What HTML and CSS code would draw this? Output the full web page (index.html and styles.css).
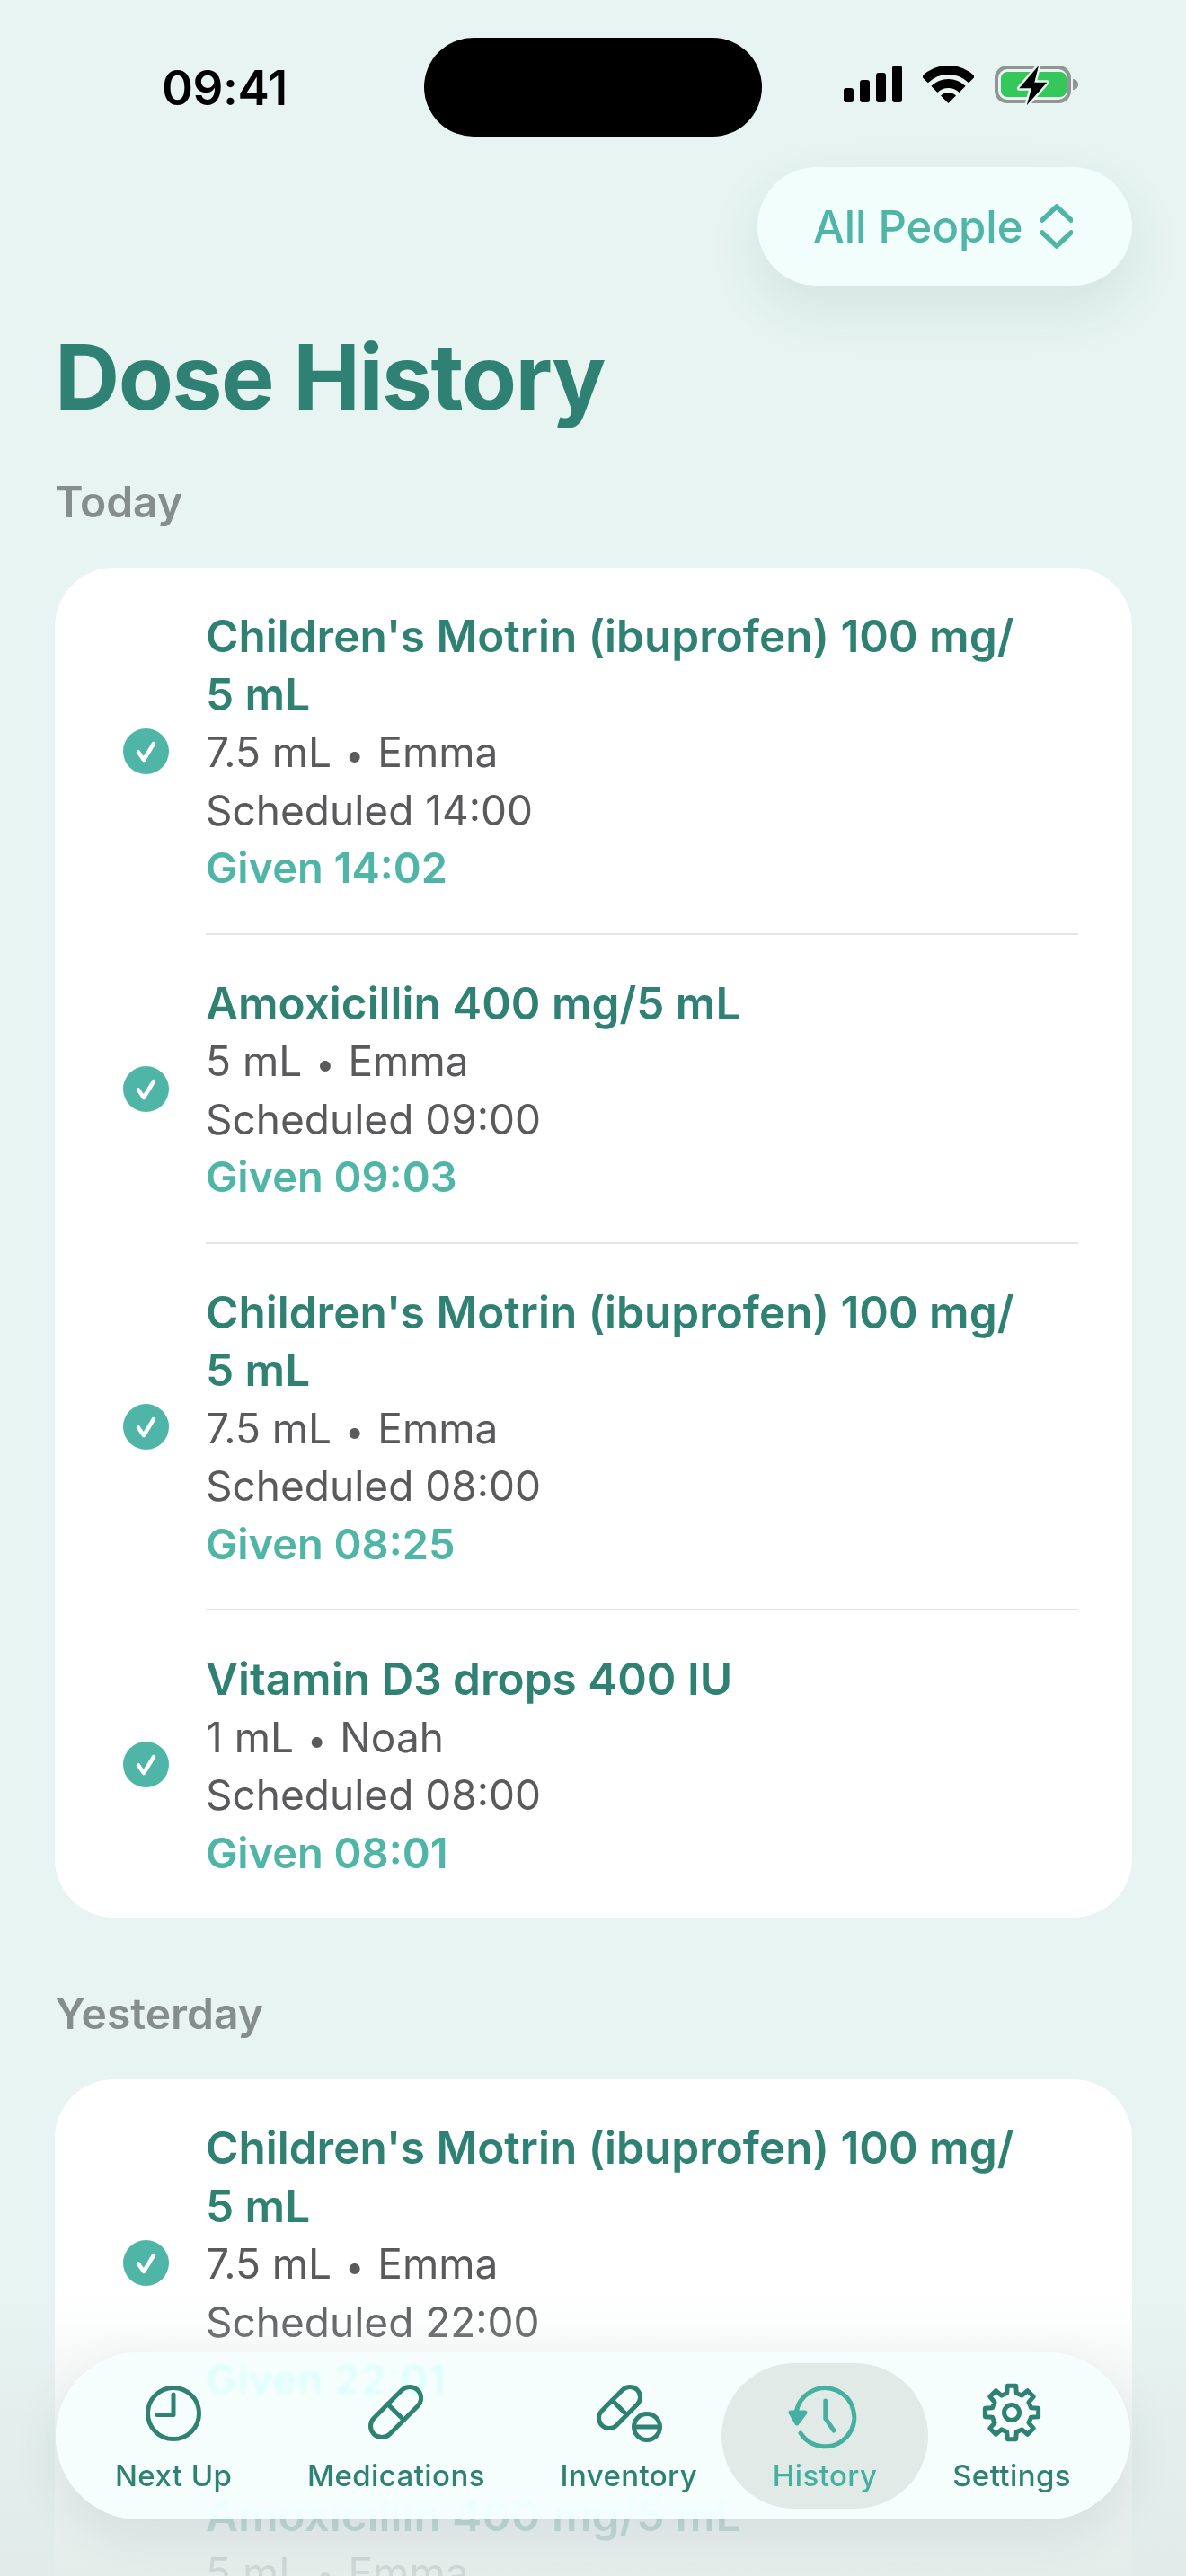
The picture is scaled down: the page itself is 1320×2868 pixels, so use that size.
FILE: index.html
```html
<!DOCTYPE html>
<html lang="en">
<head>
  <meta charset="UTF-8" />
  <title>Dose History</title>
  <link rel="stylesheet" href="styles.css">
</head>
<body>
  <div class="screen">
    <div class="status-bar">
      <div class="time">09:41</div>
      <div class="island"></div>
      <div class="status-icons">
        <svg class="signal" width="65" height="42" viewBox="0 0 65 42">
          <rect x="0" y="25" width="11" height="16" rx="3"/>
          <rect x="18" y="16" width="11" height="25" rx="3"/>
          <rect x="36" y="8" width="11" height="33" rx="3"/>
          <rect x="54" y="0" width="11" height="41" rx="3"/>
        </svg>
        <svg class="wifi" width="57" height="42" viewBox="0 0 57 42">
          <path d="M2.3 15.8A37 37 0 0 1 54.7 15.8" />
          <path d="M12.9 26.4A22 22 0 0 1 44.1 26.4" />
          <path class="wifi-dot" d="M28.5 42L20 33.5A12 12 0 0 1 37 33.5Z" />
        </svg>
        <svg class="battery" width="93" height="46" viewBox="0 0 93 46">
          <rect class="batt-shell" x="2" y="4" width="81" height="38" rx="12"/>
          <rect class="batt-fill" x="7" y="9" width="73" height="28" rx="7"/>
          <path class="batt-cap" d="M87 17c3 0 6 2 6 6s-3 6-6 6z"/>
          <path class="batt-bolt" d="M49 2L27.3 27.3H41L35.7 46.3L58.3 20.7H44.3Z"/>
        </svg>
      </div>
    </div>

    <div class="person-row">
      <button class="person-btn" type="button">
        <span>All People</span>
        <svg width="36" height="50" viewBox="0 0 36 50">
          <path d="M2 18L18 3L34 18M2 32L18 47L34 32"/>
        </svg>
      </button>
    </div>

    <h1>Dose History</h1>

    <h2>Today</h2>
    <section class="card">
      <div class="dose">
        <svg class="check" width="51" height="51" viewBox="0 0 51 51"><circle cx="25.5" cy="25.5" r="25.5"/><path d="M17 26.5L23 35L34 17"/></svg>
        <div class="dose-body">
          <div class="med">Children's Motrin (ibuprofen) 100 mg/<br>5 mL</div>
          <div class="line">7.5 mL <i>•</i> Emma</div>
          <div class="line">Scheduled 14:00</div>
          <div class="given">Given 14:02</div>
        </div>
      </div>
      <div class="dose">
        <svg class="check" width="51" height="51" viewBox="0 0 51 51"><circle cx="25.5" cy="25.5" r="25.5"/><path d="M17 26.5L23 35L34 17"/></svg>
        <div class="dose-body">
          <div class="med">Amoxicillin 400 mg/5 mL</div>
          <div class="line">5 mL <i>•</i> Emma</div>
          <div class="line">Scheduled 09:00</div>
          <div class="given">Given 09:03</div>
        </div>
      </div>
      <div class="dose">
        <svg class="check" width="51" height="51" viewBox="0 0 51 51"><circle cx="25.5" cy="25.5" r="25.5"/><path d="M17 26.5L23 35L34 17"/></svg>
        <div class="dose-body">
          <div class="med">Children's Motrin (ibuprofen) 100 mg/<br>5 mL</div>
          <div class="line">7.5 mL <i>•</i> Emma</div>
          <div class="line">Scheduled 08:00</div>
          <div class="given">Given 08:25</div>
        </div>
      </div>
      <div class="dose">
        <svg class="check" width="51" height="51" viewBox="0 0 51 51"><circle cx="25.5" cy="25.5" r="25.5"/><path d="M17 26.5L23 35L34 17"/></svg>
        <div class="dose-body">
          <div class="med">Vitamin D3 drops 400 IU</div>
          <div class="line">1 mL <i>•</i> Noah</div>
          <div class="line">Scheduled 08:00</div>
          <div class="given">Given 08:01</div>
        </div>
      </div>
    </section>

    <h2 class="later">Yesterday</h2>
    <section class="card">
      <div class="dose">
        <svg class="check" width="51" height="51" viewBox="0 0 51 51"><circle cx="25.5" cy="25.5" r="25.5"/><path d="M17 26.5L23 35L34 17"/></svg>
        <div class="dose-body">
          <div class="med">Children's Motrin (ibuprofen) 100 mg/<br>5 mL</div>
          <div class="line">7.5 mL <i>•</i> Emma</div>
          <div class="line">Scheduled 22:00</div>
          <div class="given">Given 22:01</div>
        </div>
      </div>
      <div class="dose dose-cut">
        <svg class="check" width="51" height="51" viewBox="0 0 51 51"><circle cx="25.5" cy="25.5" r="25.5"/><path d="M17 26.5L23 35L34 17"/></svg>
        <div class="dose-body">
          <div class="med">Amoxicillin 400 mg/5 mL</div>
          <div class="line">5 mL <i>•</i> Emma</div>
        </div>
      </div>
    </section>

    <div class="fade"></div>

    <nav class="tabs">
      <a class="tab">
        <svg viewBox="0 0 76 72">
          <circle cx="38" cy="36" r="28.5"/>
          <path d="M38 15V37.5H20"/>
        </svg>
        <span>Next Up</span>
      </a>
      <a class="tab">
        <svg viewBox="0 0 76 72">
          <g transform="rotate(45 37.5 34.5)">
            <rect x="25" y="0" width="25" height="69" rx="12.5"/>
            <path d="M25 34.5H50"/>
          </g>
        </svg>
        <span>Medications</span>
      </a>
      <a class="tab">
        <svg viewBox="0 0 76 72">
          <g transform="rotate(45 27.5 29.5)">
            <rect x="16" y="1.7" width="23" height="55.6" rx="11.5"/>
            <path d="M16 29.5H39"/>
          </g>
          <circle cx="58" cy="51" r="14.5"/>
          <path d="M44 51H72"/>
        </svg>
        <span>Inventory</span>
      </a>
      <a class="tab active">
        <svg viewBox="0 0 76 72">
          <path d="M6 36A32.5 32.5 0 1 1 11 58"/>
          <path class="arrow" d="M0 35H16L7 47Z"/>
          <path d="M38.8 22V41.7L48 55"/>
        </svg>
        <span>History</span>
      </a>
      <a class="tab">
        <svg viewBox="0 0 76 72">
          <g transform="translate(6 3)">
            <path d="M27.31 2.37L36.69 2.37L37.32 10.65A22 22 0 0 1 43.33 13.14L49.63 7.73L56.27 14.37L50.86 20.67A22 22 0 0 1 53.35 26.68L61.63 27.31L61.63 36.69L53.35 37.32A22 22 0 0 1 50.86 43.33L56.27 49.63L49.63 56.27L43.33 50.86A22 22 0 0 1 37.32 53.35L36.69 61.63L27.31 61.63L26.68 53.35A22 22 0 0 1 20.67 50.86L14.37 56.27L7.73 49.63L13.14 43.33A22 22 0 0 1 10.65 37.32L2.37 36.69L2.37 27.31L10.65 26.68A22 22 0 0 1 13.14 20.67L7.73 14.37L14.37 7.73L20.67 13.14A22 22 0 0 1 26.68 10.65Z"/>
            <circle cx="32" cy="32" r="8.5"/>
          </g>
        </svg>
        <span>Settings</span>
      </a>
    </nav>
  </div>
</body>
</html>
```

FILE: styles.css
```css
* { box-sizing: border-box; margin: 0; padding: 0; }
html, body { background: #e7f4f1; }
body {
  font-family: "Inter", "Liberation Sans", sans-serif;
  color: #5a5a5c;
}

.screen {
  position: relative;
  height: 2868px;
  padding: 42px 60px 0 61px;
  overflow: hidden;
  background: #e7f4f1;
}

/* status bar */
.status-bar {
  display: grid;
  grid-template-columns: 1fr 376px 1fr;
  align-items: center;
  height: 110px;
  margin: 0 -60px 0 -61px;
}
.time {
  padding-left: 180px;
  font-size: 53px;
  font-weight: 600;
  color: #000;
  letter-spacing: -0.4px;
  margin-top: 2px;
}
.island {
  height: 110px;
  background: #000;
  border-radius: 55px;
}
.status-icons {
  display: flex;
  justify-content: flex-end;
  align-items: center;
  gap: 23px;
  padding-right: 120px;
  margin-top: -7px;
}
.signal { fill: #000; }
.wifi { fill: none; stroke: #000; stroke-width: 10; }
.wifi-dot { fill: #000; stroke: none; }
.battery { overflow: visible; }
.batt-shell { fill: none; stroke: #8f9694; stroke-width: 4; }
.batt-fill { fill: #34c759; }
.batt-cap { fill: #8f9694; }
.batt-bolt { fill: #000; stroke: #e7f4f1; stroke-width: 5; paint-order: stroke; stroke-linejoin: round; }

/* filter */
.person-row {
  display: flex;
  justify-content: flex-end;
  margin-top: 34px;
}
.person-btn {
  display: flex;
  align-items: center;
  gap: 20px;
  width: 417px;
  height: 132px;
  padding-left: 62px;
  border: none;
  border-radius: 66px;
  background: #f1fefb;
  color: #4fb5a6;
  font-family: inherit;
  font-size: 49px;
  font-weight: 500;
  box-shadow: 0 24px 60px rgba(60, 90, 85, 0.1);
}
.person-btn svg { fill: none; stroke: #4fb5a6; stroke-width: 5.5; stroke-linecap: round; stroke-linejoin: round; }

h1 {
  margin-top: 42px;
  font-size: 100px;
  line-height: 120px;
  font-weight: 700;
  letter-spacing: -1.5px;
  color: #2f8273;
}
h2 {
  margin-top: 49px;
  font-size: 48px;
  line-height: 60px;
  font-weight: 600;
  color: #868e8d;
}
h2.later { margin-top: 77px; }

/* dose cards */
.card {
  margin-top: 43px;
  background: #fff;
  border-radius: 66px;
}
.dose {
  display: flex;
  align-items: center;
  gap: 41px;
  padding: 0 60px 0 76px;
}
.dose-cut .dose-body { min-height: 343px; }
.check { flex: none; }
.check circle { fill: #4fb5a6; }
.check path { fill: none; stroke: #fff; stroke-width: 4.5; stroke-linecap: round; stroke-linejoin: round; }
.dose-body {
  flex: 1;
  padding: 44px 0 40px;
  border-bottom: 2px solid #e4e6e6;
  font-size: 46px;
  line-height: 64.5px;
}
.dose:last-child .dose-body { border-bottom: none; }
.med { font-size: 49.5px; font-weight: 600; color: #2f8273; }
.line { font-weight: 400; color: #5a5a5c; }
.line i { font-style: normal; font-size: 38px; line-height: 0; padding: 0 2px; }
.given { font-size: 47px; font-weight: 600; color: #4fb5a6; }

/* bottom fade under the tab bar */
.fade {
  position: absolute;
  left: 0;
  right: 0;
  bottom: 0;
  height: 328px;
  background: linear-gradient(to bottom,
    rgba(225, 234, 232, 0) 0,
    rgba(225, 234, 232, 0.1) 45px,
    rgba(225, 234, 232, 0.25) 79px,
    rgba(225, 234, 232, 0.8) 265px,
    rgba(225, 234, 232, 0.88) 328px);
}

/* tab bar */
.tabs {
  position: absolute;
  left: 62px;
  right: 62px;
  bottom: 63px;
  height: 186px;
  display: flex;
  justify-content: space-between;
  padding: 12px 66px;
  border-radius: 93px;
  background: rgba(243, 254, 251, 0.82);
  backdrop-filter: blur(3px) saturate(2.5) brightness(1.25);
  box-shadow: 0 16px 50px rgba(60, 90, 85, 0.1);
}
.tab {
  display: flex;
  flex-direction: column;
  align-items: center;
  padding-top: 20px;
  color: #2f8273;
}
.tab svg {
  width: 76px;
  height: 72px;
  overflow: visible;
  fill: none;
  stroke: currentColor;
  stroke-width: 5;
  stroke-linecap: round;
  stroke-linejoin: round;
}
.tab span {
  margin-top: 11px;
  font-size: 33px;
  line-height: 44px;
  font-weight: 500;
  letter-spacing: 0.4px;
}
.tab.active {
  padding-left: 57px;
  padding-right: 57px;
  margin: 0 -57px;
  border-radius: 81px;
  background: #e2eae8;
  color: #45b0a0;
}
.tab .arrow { fill: currentColor; }
```
